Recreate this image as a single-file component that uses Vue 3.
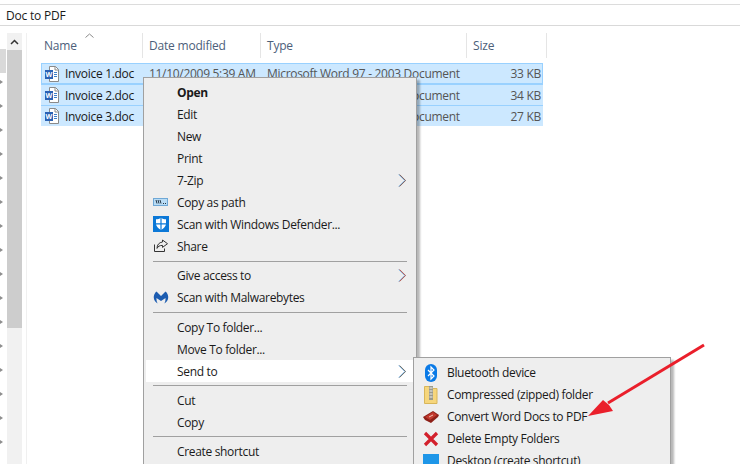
<script setup>
const files = [
  { name: 'Invoice 1.doc', size: '33 KB' },
  { name: 'Invoice 2.doc', size: '34 KB' },
  { name: 'Invoice 3.doc', size: '27 KB' }
]

const columns = [
  { label: 'Name', width: 102 },
  { label: 'Date modified', width: 118 },
  { label: 'Type', width: 206 },
  { label: 'Size', width: 80 }
]

const navArrows = 16
</script>

<template>
  <div class="window">
    <div class="title-bar">Doc to PDF</div>

    <div class="content">
      <div class="nav">
        <div class="nav-arrows">
          <div class="nav-selected"></div>
          <span v-for="n in navArrows" :key="n" class="nav-arrow"></span>
        </div>
        <div class="scrollbar">
          <div class="scroll-up">
            <svg width="9" height="6" viewBox="0 0 9 6"><path d="M1 5l3.500-3.500L8 5" fill="none" stroke="#333" stroke-width="1.500" /></svg>
          </div>
          <div class="scroll-thumb"></div>
        </div>
      </div>

      <div class="list">
        <div class="list-head">
          <div v-for="c in columns" :key="c.label" class="col" :style="{ width: c.width + 'px' }">{{ c.label }}</div>
          <svg class="sort" width="9" height="5" viewBox="0 0 9 5"><path d="M.5 4.500l4-3.500 4 3.500" fill="none" stroke="#8a8a8a" /></svg>
        </div>
        <div class="rows">
          <div v-for="(f, i) in files" :key="f.name" class="row" :class="{ focus: i === 0 }">
            <svg class="doc" width="16" height="16" viewBox="0 0 16 16">
              <path d="M5.500.5h6l3 3v12h-9z" fill="#fff" stroke="#8a8a8a" />
              <path d="M11 .5v3.500h3.500" fill="none" stroke="#8a8a8a" />
              <path d="M10 6.500h3M10 8.500h3M10 10.500h3" stroke="#3f7fc8" />
              <rect x="1" y="4" width="8" height="9" fill="#2b62b4" />
              <text x="1.500" y="11" class="doc-w">W</text>
            </svg>
            <span class="row-name">{{ f.name }}</span>
            <span class="row-date">11/10/2009 5:39 AM</span>
            <span class="row-type">Microsoft Word 97 - 2003 Document</span>
            <span class="row-size">{{ f.size }}</span>
          </div>
        </div>
      </div>
    </div>

    <div class="menu main-menu">
      <div class="item bold">Open</div>
      <div class="item">Edit</div>
      <div class="item">New</div>
      <div class="item">Print</div>
      <div class="item">
        7-Zip
        <svg class="chev" width="8" height="13" viewBox="0 0 8 13" fill="none">
          <path d="M1 .5l6 6-6 6" stroke="#3f8fd8" />
          <path d="M1.600 .5l6 6-6 6" stroke="#7a3a20" stroke-width=".7" />
        </svg>
      </div>
      <div class="item">
        <svg class="ico" width="16" height="16" viewBox="0 0 16 16">
          <rect x=".5" y="4.500" width="14" height="7" fill="#b9dcf5" stroke="#6fa8d6" />
          <path d="M3 6l1 3.500M5 6l1 3.500M7 6l1 3.500" stroke="#234" />
          <path d="M10 9.500h1M12 9.500h1" stroke="#234" />
        </svg>
        Copy as path
      </div>
      <div class="item">
        <svg class="ico" width="16" height="16" viewBox="0 0 16 16">
          <rect width="16" height="16" fill="#0b78d7" />
          <path d="M8 1.800c1.500 1 3.200 1.500 5 1.500v4.500c0 2.500-2.300 4.600-5 6.200-2.700-1.600-5-3.700-5-6.200V3.300c1.800 0 3.500-.5 5-1.500z" fill="#fff" />
          <path d="M8 1.800v12.200M3 7.800h10" stroke="#0b78d7" stroke-width="1.200" />
        </svg>
        Scan with Windows Defender...
      </div>
      <div class="item">
        <svg class="ico" width="16" height="16" viewBox="0 0 16 16" fill="none" stroke="#333">
          <path d="M1.500 6.500v7h10v-3" />
          <path d="M9.500 2l5 3.700-5 3.700v-2c-3 0-4.500 1-5.500 3 0-3.500 2-6 5.500-6.400z" />
        </svg>
        Share
      </div>
      <div class="sep first"></div>
      <div class="item">
        Give access to
        <svg class="chev" width="8" height="13" viewBox="0 0 8 13" fill="none">
          <path d="M1 .5l6 6-6 6" stroke="#3f8fd8" />
          <path d="M1.600 .5l6 6-6 6" stroke="#c0402c" stroke-width=".8" />
        </svg>
      </div>
      <div class="item">
        <svg class="ico" width="16" height="16" viewBox="0 0 16 16">
          <path d="M3.500 2.500C1.500 4 .5 6.500.8 9c.3 2.500 1.800 4.500 4 5.500-1-1.300-1.400-3-1.300-5.500L8 12l4.500-3c.1 2.500-.3 4.200-1.300 5.500 2.200-1 3.700-3 4-5.500.3-2.500-.7-5-2.700-6.500L8 7z" fill="#1c5cb0" />
        </svg>
        Scan with Malwarebytes
      </div>
      <div class="sep second"></div>
      <div class="item">Copy To folder...</div>
      <div class="item">Move To folder...</div>
      <div class="item hot">
        Send to
        <svg class="chev" width="8" height="13" viewBox="0 0 8 13" fill="none">
          <path d="M1 .5l6 6-6 6" stroke="#3f8fd8" />
          <path d="M1.600 .5l6 6-6 6" stroke="#5a4a30" stroke-width=".7" />
        </svg>
      </div>
      <div class="sep"></div>
      <div class="item">Cut</div>
      <div class="item">Copy</div>
      <div class="sep"></div>
      <div class="item">Create shortcut</div>
    </div>

    <div class="menu sub-menu">
      <div class="item">
        <svg class="ico" width="16" height="18" viewBox="0 0 16 18">
          <rect x="2" y="0" width="12" height="18" rx="6" fill="#0a7ae6" />
          <path d="M5 6l6 6-3 3V3l3 3-6 6" fill="none" stroke="#fff" stroke-width="1.200" />
        </svg>
        Bluetooth device
      </div>
      <div class="item">
        <svg class="ico" width="16" height="18" viewBox="0 0 16 18">
          <path d="M1.500 .5h7v2h5.500v15H1.500z" fill="#f6d67c" stroke="#d8b65a" />
          <rect x="6" y="0" width="4" height="14" fill="#9a9a8c" />
          <path d="M6.500 2h3M6.500 5h3M6.500 8h3M6.500 11h3" stroke="#eee" />
        </svg>
        Compressed (zipped) folder
      </div>
      <div class="item">
        <svg class="ico" width="16" height="12" viewBox="0 0 16 12">
          <path d="M0 6l10-6 6 4-1 2-7 6-6-3z" fill="#8e2018" />
          <path d="M2 6l8-5 4 3-7 5z" fill="#c2392e" />
          <path d="M6 6l4-2" stroke="#f0c0b0" />
        </svg>
        Convert Word Docs to PDF
      </div>
      <div class="item">
        <svg class="ico" width="16" height="16" viewBox="0 0 16 16">
          <path d="M2 2l12 12M14 2L2 14" stroke="#d3202c" stroke-width="3.200" />
        </svg>
        Delete Empty Folders
      </div>
      <div class="item">
        <svg class="ico" width="16" height="14" viewBox="0 0 16 14">
          <rect width="16" height="14" fill="#1e96e8" />
        </svg>
        Desktop (create shortcut)
      </div>
    </div>

    <svg class="pointer" width="130" height="80" viewBox="0 0 130 80">
      <path d="M126 4L30 62" stroke="#ea1f2b" stroke-width="3" fill="none" />
      <path d="M10 75L25 59l6 5 4 6z" fill="#ea1f2b" />
    </svg>
  </div>
</template>

<style>
html, body {
  margin: 0;
  background: #fff;
  overflow: hidden;
}
</style>

<style scoped>
.window {
  position: relative;
  width: 740px;
  height: 464px;
  overflow: hidden;
  background: #fff;
  font-family: "Open Sans", "Noto Sans", sans-serif;
  font-size: 12px;
  color: #1a1a1a;
}

.title-bar {
  margin-top: 4px;
  height: 20px;
  line-height: 21px;
  padding-left: 6px;
  border-top: 1px solid #dcdcdc;
  border-bottom: 1px solid #d9d9d9;
  letter-spacing: -0.2px;
}

.content {
  display: flex;
  padding-top: 7px;
}

.nav {
  display: flex;
  width: 26px;
  height: 431px;
  border-right: 1px solid #f0f0f0;
}

.nav-arrows {
  width: 7px;
  padding-top: 16px;
  display: flex;
  flex-direction: column;
}

.nav-selected {
  width: 6px;
  height: 24px;
  flex: none;
  background: #d9d9d9;
}

.nav-arrow {
  height: 24px;
  flex: none;
}

.nav-arrow::before {
  content: "";
  display: block;
  width: 0;
  margin-top: 7px;
  border-left: 3px solid #8e8e8e;
  border-top: 2.500px solid transparent;
  border-bottom: 2.500px solid transparent;
}

.scrollbar {
  width: 15px;
  background: #f1f1f1;
}

.scroll-up {
  height: 17px;
  display: flex;
  align-items: center;
  justify-content: center;
}

.scroll-thumb {
  height: 278px;
  background: #cdcdcd;
}

.list {
  padding-left: 14px;
}

.list-head {
  position: relative;
  display: flex;
  height: 25px;
}

.col {
  box-sizing: border-box;
  padding-left: 3px;
  line-height: 26px;
  color: #4c607a;
  border-right: 1px solid #e5e5e5;
  letter-spacing: -0.2px;
}

.col + .col {
  padding-left: 6px;
}

.sort {
  position: absolute;
  left: 44px;
  top: 0;
}

.rows {
  margin-top: 5px;
}

.row {
  position: relative;
  box-sizing: border-box;
  width: 502px;
  height: 21px;
  display: flex;
  align-items: center;
  background: #cce8ff;
  border-top: 1px solid #99d1ff;
  white-space: nowrap;
  letter-spacing: -0.3px;
}

.row.focus {
  border: 1px solid #99d1ff;
  border-left: 0;
  border-right: 0;
  box-shadow: inset 1px 0 #99d1ff, inset -1px 0 #99d1ff;
}

.doc {
  margin-left: 3px;
  flex: none;
}

.doc-w {
  font-size: 7px;
  font-weight: 700;
  fill: #fff;
}

.row-name {
  margin-left: 5px;
  width: 84px;
  flex: none;
}

.row-date {
  width: 118px;
  flex: none;
  color: #555;
}

.row-type {
  width: 206px;
  flex: none;
  color: #555;
}

.row-size {
  width: 68px;
  flex: none;
  text-align: right;
  color: #555;
}

.menu {
  position: absolute;
  box-sizing: border-box;
  background: #eeeeee;
  border: 1px solid #a0a0a0;
  box-shadow: 3px 3px 2px rgba(0, 0, 0, 0.28);
  padding: 3px 2px;
  letter-spacing: -0.33px;
}

.main-menu {
  left: 143px;
  top: 77px;
  width: 274px;
  height: 400px;
}

.sub-menu {
  left: 413px;
  top: 357px;
  width: 258px;
  height: 120px;
  padding-top: 4px;
}

.item {
  position: relative;
  height: 22px;
  line-height: 24px;
  padding-left: 31px;
  white-space: nowrap;
}

.sub-menu .item {
  line-height: 22px;
}

.bold {
  font-weight: 700;
}

.hot {
  background: #fff;
}

.ico {
  position: absolute;
  left: 7px;
  top: 50%;
  transform: translateY(-50%);
}

.chev {
  position: absolute;
  right: 8px;
  top: 5px;
}

.sep {
  height: 1px;
  margin: 3px 7px;
  background: #a0a0a0;
}

.sep.first {
  margin-top: 4px;
  margin-bottom: 2px;
}

.sep.second {
  margin-top: 4px;
}

.pointer {
  position: absolute;
  left: 578px;
  top: 341px;
}
</style>
